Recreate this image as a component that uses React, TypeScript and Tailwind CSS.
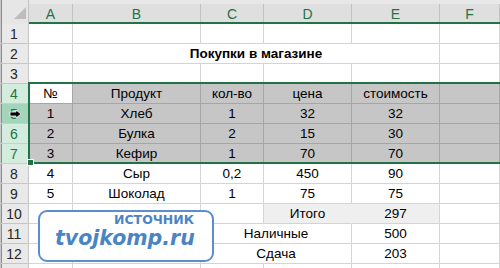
import type { ReactNode } from 'react'

const GREEN = '#217346'

// cell looks
const base = 'flex items-center justify-center whitespace-nowrap border-r border-b text-[13.5px] leading-none text-black'
const plain = `${base} border-[#d4d4d4] bg-white`
const picked = `${base} border-[#a6a6a6] bg-[#c6c6c6]`
const shaded = `${base} border-[#d4d4d4] bg-[#efefef]`

const edge = 'shadow-[inset_1px_0_0_#c8c8c8,inset_2px_0_0_#8c8c8c]'

const Cell = ({ cls = plain, children }: { cls?: string; children?: ReactNode }) => (
  <div className={cls}>{children}</div>
)

const RowHead = ({ n, state }: { n?: number; state?: 'sel' | 'hot' }) => {
  let look = 'bg-[#e9e9e9] text-[#262626] border-[#c6c6c6]'
  if (state === 'sel') look = 'bg-[#d3ecdd] text-[#217346] border-[#b9d8c5]'
  if (state === 'hot') look = 'bg-[#a2d5b9] text-[#217346] border-[#b9d8c5]'
  return (
    <div className={`flex items-center justify-center border-r border-b text-[14px] leading-none ${edge} ${look}`}>
      {n}
    </div>
  )
}

const ColHead = ({ label }: { label: string }) => (
  <div className="flex flex-col">
    <div className="h-[4px] bg-[#e8e8e8]" />
    <div className="flex h-[18px] items-center justify-center border-r border-[#c2c2c2] bg-[#dfdfdf] pt-[1px] text-[14px] leading-none text-[#217346]">
      {label}
    </div>
    <div className="h-[2px] bg-[#217346]" />
  </div>
)

const empty = (n: number, cls = plain) => Array.from({ length: n }, (_, i) => <Cell key={i} cls={cls} />)

export default function App() {
  const picks = [
    ['1', 'Хлеб', '1', '32', '32'],
    ['2', 'Булка', '2', '15', '30'],
    ['3', 'Кефир', '1', '70', '70'],
  ]
  const plainRows = [
    ['4', 'Сыр', '0,2', '450', '90'],
    ['5', 'Шоколад', '1', '75', '75'],
  ]

  return (
    <div className="relative h-[268px] w-[500px] overflow-hidden bg-white font-['Liberation_Sans',Arial,sans-serif]">
      <div className="grid grid-cols-[29px_44px_128px_63px_88px_88px_60px] grid-rows-[24px_repeat(13,20px)]">
        {/* header */}
        <div className={`relative border-r border-[#c2c2c2] bg-[#e6e6e6] ${edge}`}>
          <svg className="absolute left-[14px] top-[7px]" width="12" height="12" viewBox="0 0 12 12">
            <polygon points="12,0 12,12 0,12" fill="#bcbcbc" />
          </svg>
        </div>
        {['A', 'B', 'C', 'D', 'E', 'F'].map((l) => (
          <ColHead key={l} label={l} />
        ))}

        {/* 1 */}
        <RowHead n={1} />
        {empty(6)}

        {/* 2 */}
        <RowHead n={2} />
        <Cell />
        <div className={`${plain} col-span-4 font-bold`}>Покупки в магазине</div>
        <Cell />

        {/* 3 */}
        <RowHead n={3} />
        {empty(6)}

        {/* 4 */}
        <RowHead n={4} state="sel" />
        <Cell cls={`${base} border-[#a6a6a6] bg-white`}>№</Cell>
        <Cell cls={picked}>Продукт</Cell>
        <Cell cls={picked}>кол-во</Cell>
        <Cell cls={picked}>цена</Cell>
        <Cell cls={picked}>стоимость</Cell>
        <Cell cls={picked} />

        {/* 5-7 */}
        {picks.map((r, i) => [
          <RowHead key={`h${i}`} n={5 + i} state={i === 0 ? 'hot' : 'sel'} />,
          ...r.map((v, j) => (
            <Cell key={`${i}-${j}`} cls={picked}>
              {v}
            </Cell>
          )),
          <Cell key={`f${i}`} cls={picked} />,
        ])}

        {/* 8-9 */}
        {plainRows.map((r, i) => [
          <RowHead key={`ph${i}`} n={8 + i} />,
          ...r.map((v, j) => <Cell key={`p${i}-${j}`}>{v}</Cell>),
          <Cell key={`pf${i}`} />,
        ])}

        {/* 10 */}
        <RowHead n={10} />
        {empty(3)}
        <Cell cls={`${shaded} border-r-[#efefef]`}>Итого</Cell>
        <Cell cls={shaded}>297</Cell>
        <Cell />

        {/* 11 */}
        <RowHead n={11} />
        {empty(2)}
        <div className={`${plain} col-span-2`}>Наличные</div>
        <Cell>500</Cell>
        <Cell />

        {/* 12 */}
        <RowHead n={12} />
        {empty(2)}
        <div className={`${plain} col-span-2`}>Сдача</div>
        <Cell>203</Cell>
        <Cell />

        {/* 13, only its top edge shows */}
        <RowHead />
        {empty(6)}
      </div>

      {/* selection frame */}
      <div className="absolute left-[28px] top-[82px] h-[82px] w-[480px] border-2 border-r-0 border-[#217346]" />
      <div className="absolute left-[27px] top-[159px] h-[7px] w-[7px] border border-white" style={{ background: GREEN }} />

      {/* cursor */}
      <svg className="absolute left-[9px] top-[109px]" width="14" height="10" viewBox="0 0 14 10">
        <polygon points="1,3 7,3 7,1 12,5 7,9 7,7 1,7" fill="#000" stroke="#fff" strokeWidth="0.8" />
      </svg>

      {/* watermark */}
      <div className="absolute left-[38px] top-[210px] flex h-[52px] w-[176px] flex-col rounded-[9px] border-2 border-[#5a8fcb] bg-white pl-[15px] pr-[18px] pt-[1px] font-['DejaVu_Sans',sans-serif] text-[#4a84c4]">
        <div className="self-end text-[12.5px] font-bold leading-[14px]">ИСТОЧНИК</div>
        <div className="-mt-[1px] text-[20.5px] font-bold italic leading-[24px]">tvojkomp.ru</div>
      </div>
    </div>
  )
}
